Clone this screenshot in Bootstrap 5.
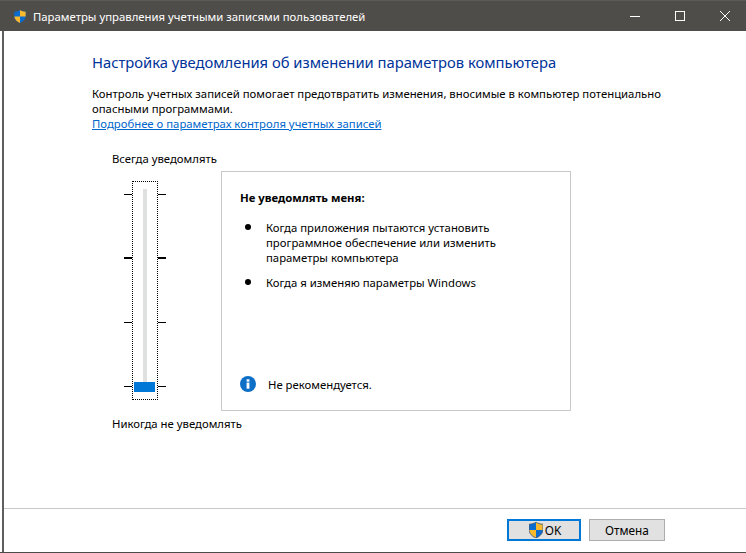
<!DOCTYPE html>
<html lang="ru">
<head>
<meta charset="utf-8">
<title>UAC</title>
<link href="https://cdn.jsdelivr.net/npm/bootstrap@5.3.0/dist/css/bootstrap.min.css" rel="stylesheet">
<style>
html,body{height:100%;margin:0;overflow:hidden}
body{background:#fff;font-family:"Noto Sans","Open Sans",sans-serif;font-size:11.34px;color:#000;line-height:15px}
.uac-win{height:553px;width:746px;border-bottom:1px solid #4d4b48}
.uac-title{height:31px;background:#4f4d4a;border-top:1px solid #5c5a57;color:#fff;font-size:11.35px;padding-left:14px;overflow:hidden}
.uac-title-text{margin-left:7px}
.uac-ctl{width:45px;height:30px;padding-bottom:1px;flex:none}
.uac-ctl-last{margin-right:-1px}
.uac-body{margin-left:2px;border-left:2px solid #5f5f5f}
.uac-main{padding-left:88px}
.uac-head{font-size:14.75px;color:#003399;line-height:20px;padding-top:21px;margin-bottom:14px}
.uac-link{color:#0066cc;text-decoration:underline}
.uac-top{width:600px}
.uac-row{margin-top:20px}
.uac-slider-col{width:129px;flex:none}
.uac-slider-label{margin-left:20px;white-space:nowrap}
.uac-track-wrap{width:42px;height:219px;margin:15px 0 16px 32px;position:relative}
.uac-focus{position:absolute;left:8px;top:0;width:26px;height:219px;border:1px dotted #000}
.uac-tick{position:absolute;height:1px;background:#000;width:8px}
.uac-tick.thick{height:2px}
.uac-tick.l{left:0}
.uac-tick.r{right:0}
.uac-t1{top:13px}.uac-t2{top:76px}.uac-t3{top:141px}.uac-t4{top:205px}
.uac-rail{position:absolute;left:10px;top:7px;width:4px;height:203px;background:#dfe1e0}
.uac-thumb{position:absolute;left:-9px;top:193px;width:21px;height:10px;background:#0078d7}
.uac-panel{width:350px;height:240px;border:1px solid #c9c9c9;padding:18px 18px 0 18px;margin-top:20px}
.uac-panel ul{padding-left:26px;margin:15px 0 0 0;list-style:none}
.uac-panel li{position:relative;margin-bottom:10px}
.uac-panel li::before{content:"";position:absolute;left:-21px;top:4px;width:6px;height:6px;border-radius:50%;background:#000}
.uac-note{margin-top:auto;padding-bottom:18px}
.uac-note svg{margin-right:12px}
.uac-foot{border-top:1px solid #c9c9c9;height:44px;padding:10px 81px 0 0}
.uac-btn{height:22px;width:76px;padding:0;font-size:11.8px;line-height:18px;background:#e1e1e1;border:1px solid #adadad;border-radius:0;color:#000}
.uac-btn:hover{background:#e1e1e1;border-color:#adadad;color:#000}
.uac-btn.def{border:2px solid #0078d7;width:74px;padding-left:2px}
.uac-btn.def svg{margin-right:2px}
</style>
</head>
<body>
<div class="uac-win d-flex flex-column">
  <div class="uac-title d-flex align-items-center">
    <svg width="12" height="13" viewBox="0 0 13 15"><path d="M6.500 0C5 1.300 2.500 2 0 2v5c0 4 3 6.500 6.500 8C10 13.500 13 11 13 7V2c-2.500 0-5-.7-6.500-2z" fill="#0a6ccf"/><path d="M6.500 0C8 1.300 10.500 2 13 2v5.500H6.500zM6.500 7.500V15C3 13.500.3 11 0 7.500z" fill="#f8b92d"/></svg>
    <span class="uac-title-text flex-grow-1">Параметры управления учетными записями пользователей</span>
    <div class="uac-ctl d-flex align-items-center justify-content-center"><svg width="10" height="10"><path d="M0 5.500h10" stroke="#fff"/></svg></div>
    <div class="uac-ctl d-flex align-items-center justify-content-center"><svg width="10" height="10"><rect x=".5" y=".5" width="9" height="9" fill="none" stroke="#fff"/></svg></div>
    <div class="uac-ctl uac-ctl-last d-flex align-items-center justify-content-center"><svg width="10" height="10"><path d="M0 0l10 10M10 0L0 10" stroke="#fff"/></svg></div>
  </div>
  <div class="uac-body flex-grow-1 d-flex flex-column">
    <div class="uac-main">
      <div class="uac-head">Настройка уведомления об изменении параметров компьютера</div>
      <div class="uac-top">Контроль учетных записей помогает предотвратить изменения, вносимые в компьютер потенциально опасными программами.<br><a class="uac-link" href="#">Подробнее о параметрах контроля учетных записей</a></div>
      <div class="d-flex uac-row">
        <div class="uac-slider-col">
          <div class="uac-slider-label">Всегда уведомлять</div>
          <div class="uac-track-wrap">
            <span class="uac-tick l uac-t1"></span><span class="uac-tick r uac-t1"></span>
            <span class="uac-tick thick l uac-t2"></span><span class="uac-tick thick r uac-t2"></span>
            <span class="uac-tick l uac-t3"></span><span class="uac-tick r uac-t3"></span>
            <span class="uac-tick l uac-t4"></span><span class="uac-tick r uac-t4"></span>
            <div class="uac-focus">
              <div class="uac-rail"><div class="uac-thumb"></div></div>
            </div>
          </div>
          <div class="uac-slider-label">Никогда не уведомлять</div>
        </div>
        <div class="uac-panel d-flex flex-column">
          <strong>Не уведомлять меня:</strong>
          <ul>
            <li>Когда приложения пытаются установить программное обеспечение или изменить параметры компьютера</li>
            <li>Когда я изменяю параметры Windows</li>
          </ul>
          <div class="uac-note d-flex align-items-center">
            <svg width="16" height="16" viewBox="0 0 17 17"><circle cx="8.500" cy="8.500" r="8.500" fill="#0e6fc7"/><rect x="7" y="7" width="3" height="6.500" fill="#fff"/><rect x="7" y="3.500" width="3" height="2.500" fill="#fff"/></svg>
            <span>Не рекомендуется.</span>
          </div>
        </div>
      </div>
    </div>
    <div class="uac-foot mt-auto d-flex justify-content-end align-items-start gap-2">
      <button class="btn uac-btn def d-flex align-items-center justify-content-center"><svg width="14" height="16" viewBox="0 0 13 15"><path d="M6.500 0C5 1.300 2.500 2 0 2v5c0 4 3 6.500 6.500 8C10 13.500 13 11 13 7V2c-2.500 0-5-.7-6.500-2z" fill="#0a6ccf" stroke="#4a4a4a" stroke-width=".6"/><path d="M6.500 .4C8 1.600 10.500 2.300 12.700 2.300v5.200H6.500zM6.500 7.500v7.100C3.200 13.200.6 11 .3 7.500z" fill="#f8b92d"/></svg>OK</button>
      <button class="btn uac-btn">Отмена</button>
    </div>
  </div>
</div>
</body>
</html>
